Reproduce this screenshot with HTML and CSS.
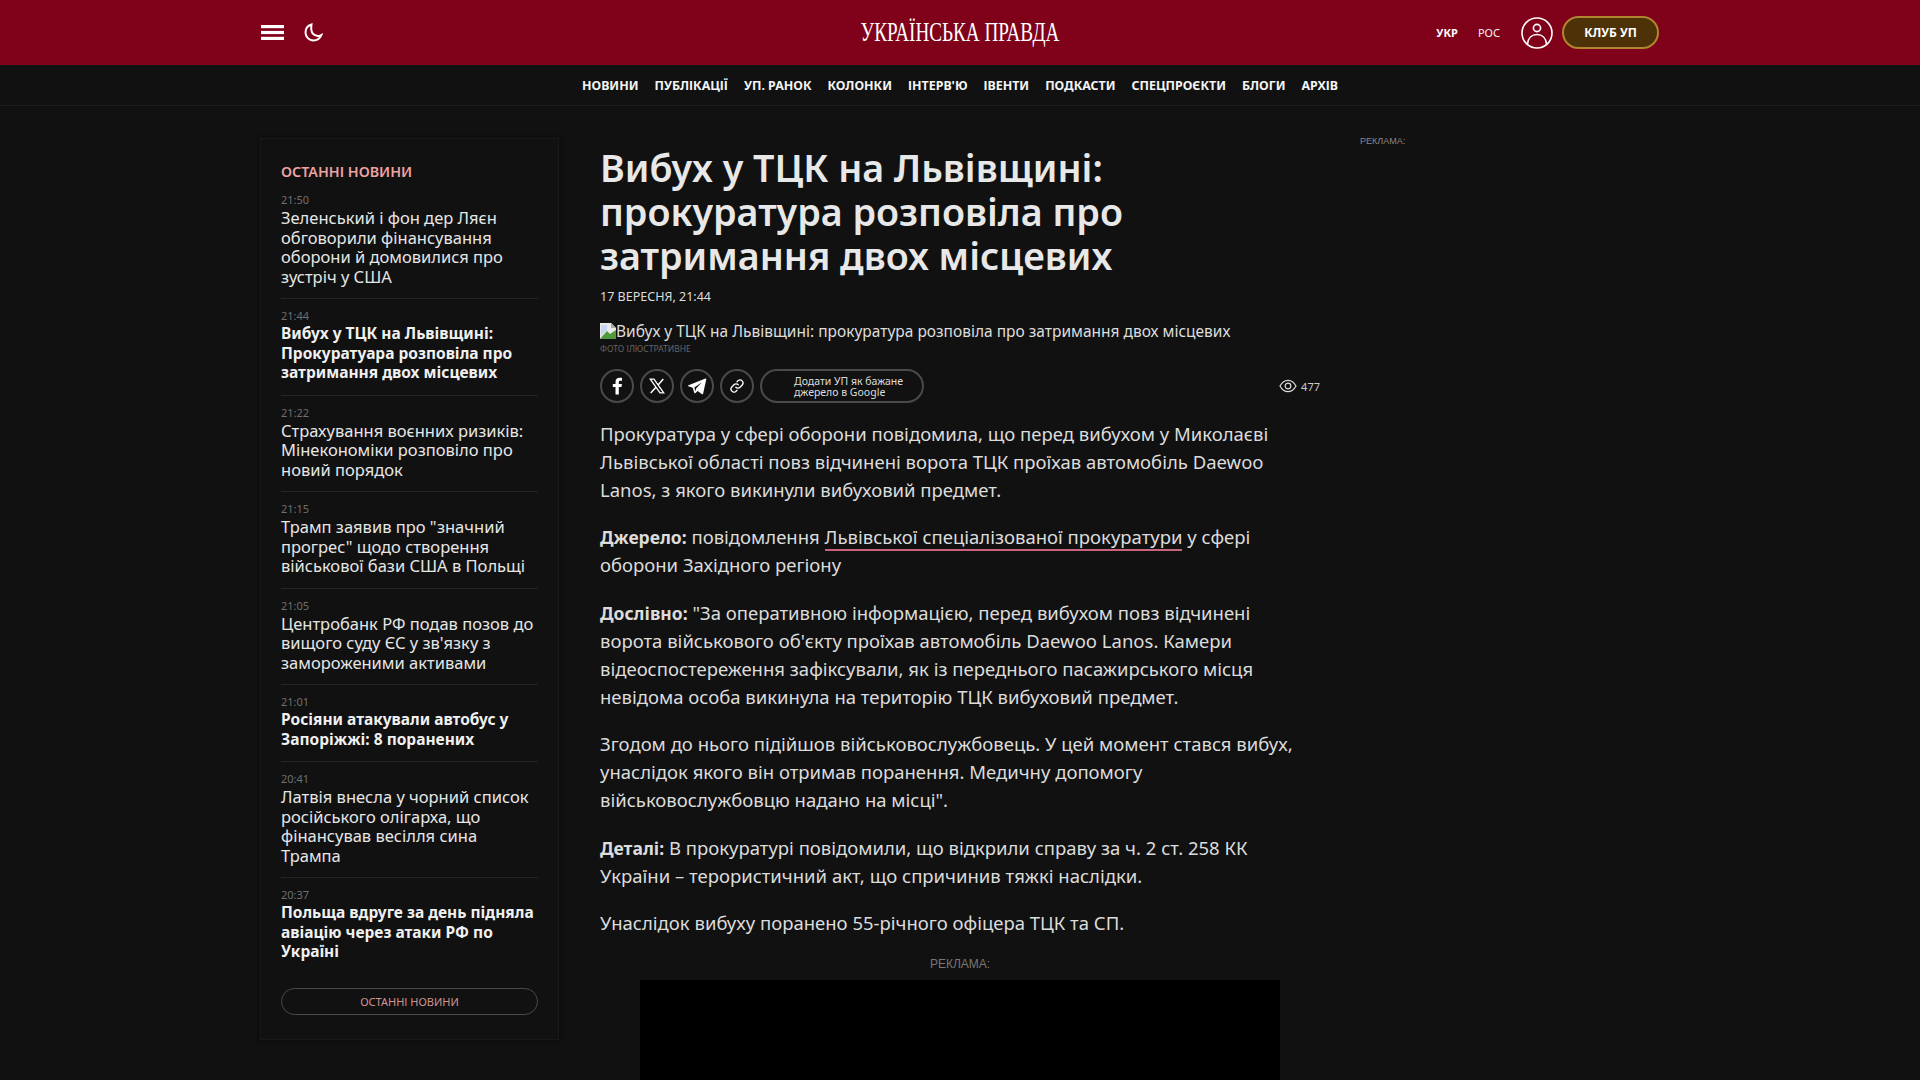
FILE: index.html
```html
<!DOCTYPE html>
<html lang="uk">
<head>
    <meta charset="UTF-8">
    <meta name="viewport" content="width=device-width, initial-scale=1.0">
    <title>Українська правда</title>
    <link rel="stylesheet" href="styles.css">
</head>
<body>
    <header class="topbar">
        <div class="topbar-inner">
            <div class="topbar-left">
                <svg class="icon-menu" width="23" height="15" viewBox="0 0 23 15" fill="#fff"><rect width="23" height="3.2"/><rect y="5.9" width="23" height="3.2"/><rect y="11.800" width="23" height="3.200"/></svg>
                <svg class="icon-moon" width="19" height="19" viewBox="0 0 19 19" fill="none" stroke="#fff" stroke-width="2"><path d="M7.500 1.500C4 2.600 1.500 5.700 1.500 9.400c0 4.400 3.600 8.100 8 8.100 3.500 0 6.500-2.200 7.800-5.300-1.200.7-2.400.9-3.800.7-3.300-.4-5.800-3-6.200-6.200-.2-1.700 0-3.300.2-5.200Z"/></svg>
            </div>
            <div class="logo">Українська правда</div>
            <div class="topbar-right">
                <a class="lang lang-active">УКР</a>
                <a class="lang">РОС</a>
                <svg class="icon-user" width="32" height="32" viewBox="0 0 32 32" fill="none" stroke="#fff" stroke-width="1.6"><circle cx="16" cy="16" r="15"/><circle cx="16" cy="11" r="3.600"/><path d="M6.500 27c.5-6 4.400-9.500 9.500-9.500s9 3.500 9.500 9.500"/></svg>
                <a class="club">КЛУБ УП</a>
            </div>
        </div>
    </header>

    <nav class="mainnav">
        <a>Новини</a>
        <a>Публікації</a>
        <a>УП. Ранок</a>
        <a>Колонки</a>
        <a>Інтерв'ю</a>
        <a>Івенти</a>
        <a>Подкасти</a>
        <a>Спецпроєкти</a>
        <a>Блоги</a>
        <a>Архів</a>
    </nav>

    <div class="layout">
        <aside class="sidebar">
            <h2 class="sidebar-title">Останні новини</h2>
            <div class="news-item">
                <div class="news-time">21:50</div>
                <div class="news-title">Зеленський і фон дер Ляєн обговорили фінансування оборони й домовилися про зустріч у США</div>
            </div>
            <div class="news-item">
                <div class="news-time">21:44</div>
                <div class="news-title bold">Вибух у ТЦК на Львівщині: Прокуратуара розповіла про затримання двох місцевих</div>
            </div>
            <div class="news-item">
                <div class="news-time">21:22</div>
                <div class="news-title">Страхування воєнних ризиків: Мінекономіки розповіло про новий порядок</div>
            </div>
            <div class="news-item">
                <div class="news-time">21:15</div>
                <div class="news-title">Трамп заявив про "значний прогрес" щодо створення військової бази США в Польщі</div>
            </div>
            <div class="news-item">
                <div class="news-time">21:05</div>
                <div class="news-title">Центробанк РФ подав позов до вищого суду ЄС у зв'язку з замороженими активами</div>
            </div>
            <div class="news-item">
                <div class="news-time">21:01</div>
                <div class="news-title bold">Росіяни атакували автобус у Запоріжжі: 8 поранених</div>
            </div>
            <div class="news-item">
                <div class="news-time">20:41</div>
                <div class="news-title">Латвія внесла у чорний список російського олігарха, що фінансував весілля сина Трампа</div>
            </div>
            <div class="news-item last">
                <div class="news-time">20:37</div>
                <div class="news-title bold">Польща вдруге за день підняла авіацію через атаки РФ по Україні</div>
            </div>
            <a class="more-btn">Останні новини</a>
        </aside>

        <main class="article">
            <h1>Вибух у ТЦК на Львівщині: прокуратура розповіла про затримання двох місцевих</h1>
            <div class="article-date">17 вересня, 21:44</div>
            <div class="photo-alt">
                <svg width="16" height="16" viewBox="0 0 16 16"><path d="M0 0h11l5 5v11H0Z" fill="#e8e8e8"/><path d="M11 0l5 5h-5Z" fill="#aaa"/><path d="M0 16l7-8 3 3 6-4v9Z" fill="#4f9a3a"/><path d="M1 2h6v5l-6 6Z" fill="#c4d6f2"/></svg>Вибух у ТЦК на Львівщині: прокуратура розповіла про затримання двох місцевих
            </div>
            <div class="photo-caption">Фото ілюстративне</div>

            <div class="share-row">
                <a class="share-btn"><svg width="18" height="18" viewBox="0 0 18 18" fill="#fff"><path d="M10.800 17.500V10h2.700l.4-3h-3.100V5.200c0-.9.300-1.500 1.500-1.500h1.700V1C13.500.9 12.600.8 11.600.8 9.200.8 7.500 2.200 7.500 5v2H4.800v3h2.700v7.500Z"/></svg></a>
                <a class="share-btn"><svg width="16" height="16" viewBox="0 0 16 16" fill="none" stroke="#fff" stroke-width="1.300"><path d="M1.300 1.200h3.700l9.700 13.600H11Z"/><path d="M14.300 1 9.100 7M7 9.300 1.700 15" stroke-width="1.500"/></svg></a>
                <a class="share-btn"><svg width="20" height="20" viewBox="0 0 20 20" fill="#fff"><path d="M18.500 2.500 1.500 9.200c-.6.300-.6.900 0 1.100l4.200 1.400 1.700 5.300c.1.400.6.500.9.200l2.400-2.200 4.300 3.200c.4.300 1 .1 1.100-.4L19.300 3.300c.1-.6-.3-1-.8-.8ZM7.300 11.500l7.600-5.200-5.800 6.300-.6 2.900Z"/></svg></a>
                <a class="share-btn"><svg width="16" height="16" viewBox="0 0 16 16" fill="none" stroke="#fff" stroke-width="1.300" stroke-linecap="round"><path d="M6.800 9.200a3 3 0 0 0 4.300 0l2.300-2.400a3 3 0 0 0-4.200-4.200L8 3.800"/><path d="M9.200 6.800a3 3 0 0 0-4.300 0L2.600 9.200a3 3 0 0 0 4.200 4.200L8 12.200"/></svg></a>
                <a class="source-btn">Додати УП як бажане<br>джерело в Google</a>
                <div class="views">
                    <svg width="18" height="14" viewBox="0 0 18 14" fill="none" stroke="#ddd" stroke-width="1.200"><path d="M1 7c2-3.800 4.700-5.700 8-5.700S15 3.200 17 7c-2 3.800-4.700 5.700-8 5.700S3 10.800 1 7Z"/><circle cx="9" cy="7" r="2.800"/></svg>
                    <span>477</span>
                </div>
            </div>

            <div class="article-body">
                <p>Прокуратура у сфері оборони повідомила, що перед вибухом у Миколаєві Львівської області повз відчинені ворота ТЦК проїхав автомобіль Daewoo Lanos, з якого викинули вибуховий предмет.</p>
                <p><b>Джерело:</b> повідомлення <a class="inline-link">Львівської спеціалізованої прокуратури</a> у сфері оборони Західного регіону</p>
                <p><b>Дослівно:</b> "За оперативною інформацією, перед вибухом повз відчинені ворота військового об'єкту проїхав автомобіль Daewoo Lanos. Камери відеоспостереження зафіксували, як із переднього пасажирського місця невідома особа викинула на територію ТЦК вибуховий предмет.</p>
                <p>Згодом до нього підійшов військовослужбовець. У цей момент стався вибух, унаслідок якого він отримав поранення. Медичну допомогу військовослужбовцю надано на місці".</p>
                <p><b>Деталі:</b> В прокуратурі повідомили, що відкрили справу за ч. 2 ст. 258 КК України – терористичний акт, що спричинив тяжкі наслідки.</p>
                <p>Унаслідок вибуху поранено 55-річного офіцера ТЦК та СП.</p>
            </div>

            <div class="ad-inline">
                <div class="ad-label">Реклама:</div>
                <div class="ad-box"></div>
            </div>
        </main>

        <aside class="ad-side">Реклама:</aside>
    </div>
</body>
</html>
```

FILE: styles.css
```css
* {
    box-sizing: border-box;
}
html, body {
    margin: 0;
    padding: 0;
    height: 1080px;
    overflow: hidden;
}
body {
    font-family: "Noto Sans", Arial, sans-serif;
    background-color: #111;
    color: #e6e6e6;
}
.topbar {
    height: 65px;
    background-color: #80011a;
}
.topbar-inner {
    width: 1398px;
    height: 100%;
    margin: 0 auto;
    display: grid;
    grid-template-columns: 1fr auto 1fr;
    align-items: center;
}
.topbar-left {
    display: flex;
    align-items: center;
    gap: 20px;
}
.topbar-right {
    display: flex;
    align-items: center;
    justify-content: flex-end;
}
.logo {
    font-family: "Liberation Serif", serif;
    font-size: 27px;
    color: #fff;
    text-transform: uppercase;
    white-space: nowrap;
    transform: scaleX(0.71);
    margin: 0 -40px;
}
.lang {
    font-size: 11px;
    color: #f2f2f2;
    margin-right: 20px;
}
.lang-active {
    font-weight: 700;
    color: #fff;
}
.icon-user {
    margin-left: 1px;
}
.club {
    width: 97px;
    height: 33px;
    margin-left: 9px;
    display: flex;
    align-items: center;
    justify-content: center;
    background-color: #4d3208;
    border: 2px solid #b08530;
    border-radius: 17px;
    color: #fff;
    font-size: 12px;
    font-weight: 700;
}
.mainnav {
    height: 41px;
    display: flex;
    justify-content: center;
    align-items: center;
    gap: 16px;
    border-bottom: 1px solid #1d1d1d;
}
.mainnav a {
    font-size: 12.4px;
    font-weight: 700;
    color: #f4f4f4;
    text-transform: uppercase;
    white-space: nowrap;
}
.layout {
    width: 1400px;
    margin: 0 auto;
    display: flex;
    align-items: flex-start;
}
.sidebar {
    width: 299px;
    height: 902px;
    margin-top: 32px;
    padding: 21px 20px 0;
    border: 1px solid #191919;
    box-shadow: 0 0 6px rgba(0,0,0,0.4);
    flex-shrink: 0;
}
.sidebar-title {
    margin: 0 0 7px;
    font-size: 14.3px;
    line-height: 24px;
    font-weight: 600;
    color: #eba3a3;
    text-transform: uppercase;
}
.news-item {
    padding-bottom: 12px;
    margin-bottom: 8px;
    border-bottom: 1px solid #242424;
}
.news-item.last {
    border-bottom: none;
    margin-bottom: 14px;
}
.news-time {
    font-size: 11px;
    line-height: 17px;
    color: #6f6f6f;
}
.news-title {
    font-size: 16.5px;
    line-height: 19.5px;
    color: #e6e6e6;
}
.news-title.bold {
    font-size: 15.5px;
    font-weight: 700;
    color: #f0f0f0;
}
.more-btn {
    display: block;
    height: 27px;
    line-height: 25px;
    text-align: center;
    border: 1px solid #4a4a4a;
    border-radius: 14px;
    font-size: 11px;
    color: #d09393;
    text-transform: uppercase;
}
.article {
    width: 720px;
    margin-left: 41px;
    padding-top: 40px;
    flex-shrink: 0;
}
.article h1 {
    margin: 0;
    max-width: 600px;
    font-size: 37.7px;
    line-height: 44px;
    font-weight: 600;
    color: #e8e8e8;
}
.article-date {
    margin-top: 9px;
    font-size: 12.5px;
    line-height: 20px;
    color: #ddd;
    text-transform: uppercase;
}
.photo-alt {
    margin-top: 14px;
    display: flex;
    align-items: center;
    font-size: 15.5px;
    line-height: 20px;
    color: #ddd;
    white-space: nowrap;
}
.photo-caption {
    margin-top: 1px;
    font-size: 8.5px;
    line-height: 13px;
    color: #666;
    text-transform: uppercase;
}
.share-row {
    margin-top: 14px;
    height: 34px;
    display: flex;
    align-items: center;
    gap: 6px;
}
.share-btn {
    width: 34px;
    height: 34px;
    display: flex;
    align-items: center;
    justify-content: center;
    border: 2px solid #4a4a4a;
    border-radius: 50%;
}
.source-btn {
    width: 164px;
    height: 34px;
    padding-left: 32px;
    padding-top: 5px;
    display: block;
    border: 2px solid #4a4a4a;
    border-radius: 17px;
    font-size: 10.5px;
    line-height: 11px;
    color: #ddd;
    white-space: nowrap;
}
.views {
    margin-left: auto;
    display: flex;
    align-items: center;
    gap: 4px;
    font-size: 11px;
    color: #ccc;
}
.article-body {
    margin-top: 17px;
    width: 705px;
    font-size: 18.5px;
    line-height: 28px;
    color: #dcdcdc;
}
.article-body p {
    margin: 0 0 19.4px;
}
.article-body b {
    font-size: 17.5px;
}
.inline-link {
    color: inherit;
    border-bottom: 2px solid #c9647f;
}
.ad-inline {
    text-align: center;
}
.ad-label {
    font-family: "Liberation Sans", Arial, sans-serif;
    font-size: 12px;
    line-height: 16px;
    color: #777;
    text-transform: uppercase;
}
.ad-box {
    width: 640px;
    height: 280px;
    margin: 8px auto 0;
    background-color: #000;
}
.ad-side {
    margin-left: 40px;
    margin-top: 29px;
    font-family: "Liberation Sans", Arial, sans-serif;
    font-size: 9px;
    line-height: 12px;
    color: #888;
    text-transform: uppercase;
}
```
